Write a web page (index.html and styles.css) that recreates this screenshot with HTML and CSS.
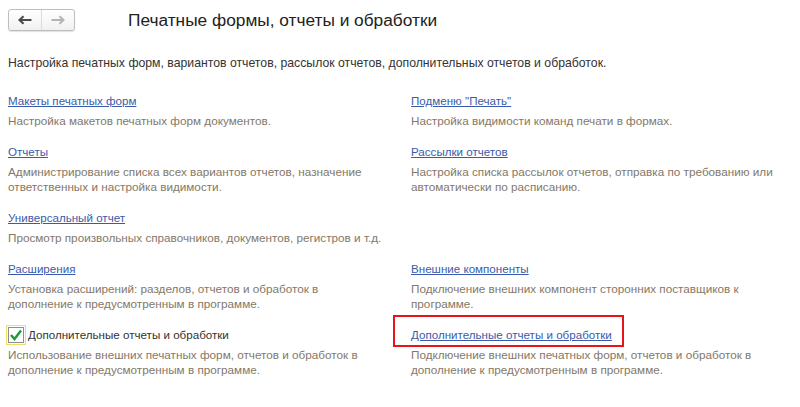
FILE: index.html
```html
<!DOCTYPE html>
<html lang="ru">
<head>
<meta charset="utf-8">
<title>Печатные формы, отчеты и обработки</title>
<link rel="stylesheet" href="styles.css">
</head>
<body>
<div class="page">
  <header class="head">
    <div class="nav">
      <span class="nav-btn">
        <svg width="14" height="10" viewBox="0 0 14 10"><path d="M1.5 5h12M5.5 1.2L1.5 5l4 3.8" fill="none" stroke="#4a4a4a" stroke-width="2.2"/></svg>
      </span>
      <span class="nav-btn">
        <svg width="14" height="10" viewBox="0 0 14 10"><path d="M0.5 5h12M8.5 1.2l4 3.8-4 3.8" fill="none" stroke="#b4b4b4" stroke-width="2"/></svg>
      </span>
    </div>
    <h1 class="title">Печатные формы, отчеты и обработки</h1>
  </header>
  <p class="intro">Настройка печатных форм, вариантов отчетов, рассылок отчетов, дополнительных отчетов и обработок.</p>
  <div class="grid">
    <div class="item">
      <a class="link" href="#">Макеты печатных форм</a>
      <p class="desc">Настройка макетов печатных форм документов.</p>
    </div>
    <div class="item">
      <a class="link" href="#">Подменю "Печать"</a>
      <p class="desc">Настройка видимости команд печати в формах.</p>
    </div>
    <div class="item">
      <a class="link" href="#">Отчеты</a>
      <p class="desc">Администрирование списка всех вариантов отчетов, назначение<br>ответственных и настройка видимости.</p>
    </div>
    <div class="item">
      <a class="link" href="#">Рассылки отчетов</a>
      <p class="desc">Настройка списка рассылок отчетов, отправка по требованию или<br>автоматически по расписанию.</p>
    </div>
    <div class="item">
      <a class="link" href="#">Универсальный отчет</a>
      <p class="desc">Просмотр произвольных справочников, документов, регистров и т.д.</p>
    </div>
    <div class="item"></div>
    <div class="item">
      <a class="link" href="#">Расширения</a>
      <p class="desc">Установка расширений: разделов, отчетов и обработок в<br>дополнение к предусмотренным в программе.</p>
    </div>
    <div class="item">
      <a class="link" href="#">Внешние компоненты</a>
      <p class="desc">Подключение внешних компонент сторонних поставщиков к<br>программе.</p>
    </div>
    <div class="item">
      <label class="check">
        <span class="box">
          <svg width="14" height="12" viewBox="0 0 14 12"><path d="M2 6l3.5 4L12 1.5" fill="none" stroke="#1f9a3a" stroke-width="2.4"/></svg>
        </span>
        <span class="check-label">Дополнительные отчеты и обработки</span>
      </label>
      <p class="desc">Использование внешних печатных форм, отчетов и обработок в<br>дополнение к предусмотренным в программе.</p>
    </div>
    <div class="item">
      <span class="marked"><a class="link" href="#">Дополнительные отчеты и обработки</a></span>
      <p class="desc">Подключение внешних печатных форм, отчетов и обработок в<br>дополнение к предусмотренным в программе.</p>
    </div>
  </div>
</div>
</body>
</html>
```

FILE: styles.css
```css
* { box-sizing: border-box; }
html, body { margin: 0; padding: 0; background: #fff; }
body {
  font-family: "Liberation Sans", Arial, sans-serif;
  font-size: 12px;
  color: #333;
}
.page { padding: 9px 8px 0 8px; }
.head { display: flex; align-items: center; height: 22px; }
.nav {
  display: flex;
  width: 67px;
  height: 22px;
  border: 1px solid #bdbdbd;
  border-radius: 3px;
  background: linear-gradient(#ffffff, #f1f1f1);
  box-shadow: 0 1px 1px rgba(0,0,0,0.12);
}
.nav-btn {
  flex: 1;
  display: flex;
  align-items: center;
  justify-content: center;
}
.nav-btn + .nav-btn { border-left: 1px solid #dcdcdc; }
.title {
  margin: 0 0 0 53px;
  font-size: 17.3px;
  font-weight: normal;
  color: #222;
  line-height: 22px;
}
.intro { margin: 25px 0 0 0; font-size: 12.25px; line-height: 15px; color: #333; }
.grid {
  display: grid;
  grid-template-columns: 403px 1fr;
  row-gap: 16px;
  margin-top: 22px;
}
.item { display: flex; flex-direction: column; align-items: flex-start; }
.link {
  color: #3a5bab;
  text-decoration: underline;
  font-size: 11.6px;
  line-height: 15px;
}
.desc {
  margin: 5px 0 0 0;
  font-size: 11.73px;
  line-height: 15px;
  color: #847868;
  white-space: nowrap;
}
.check { display: flex; align-items: center; line-height: 15px; height: 15px; }
.box {
  width: 16px;
  height: 16px;
  border: 1px solid #8e8e8e;
  background: #fff;
  outline: 1px solid #f0dc70;
  outline-offset: 1px;
  display: flex;
  align-items: center;
  justify-content: center;
  margin-right: 4px;
}
.check-label { color: #333; font-size: 11.6px; }
.marked { position: relative; line-height: 15px; display: inline-flex; }
.marked::after {
  content: "";
  position: absolute;
  left: -18px;
  right: -12px;
  top: -12px;
  bottom: -5px;
  border: 2px solid #e8141c;
}
```
